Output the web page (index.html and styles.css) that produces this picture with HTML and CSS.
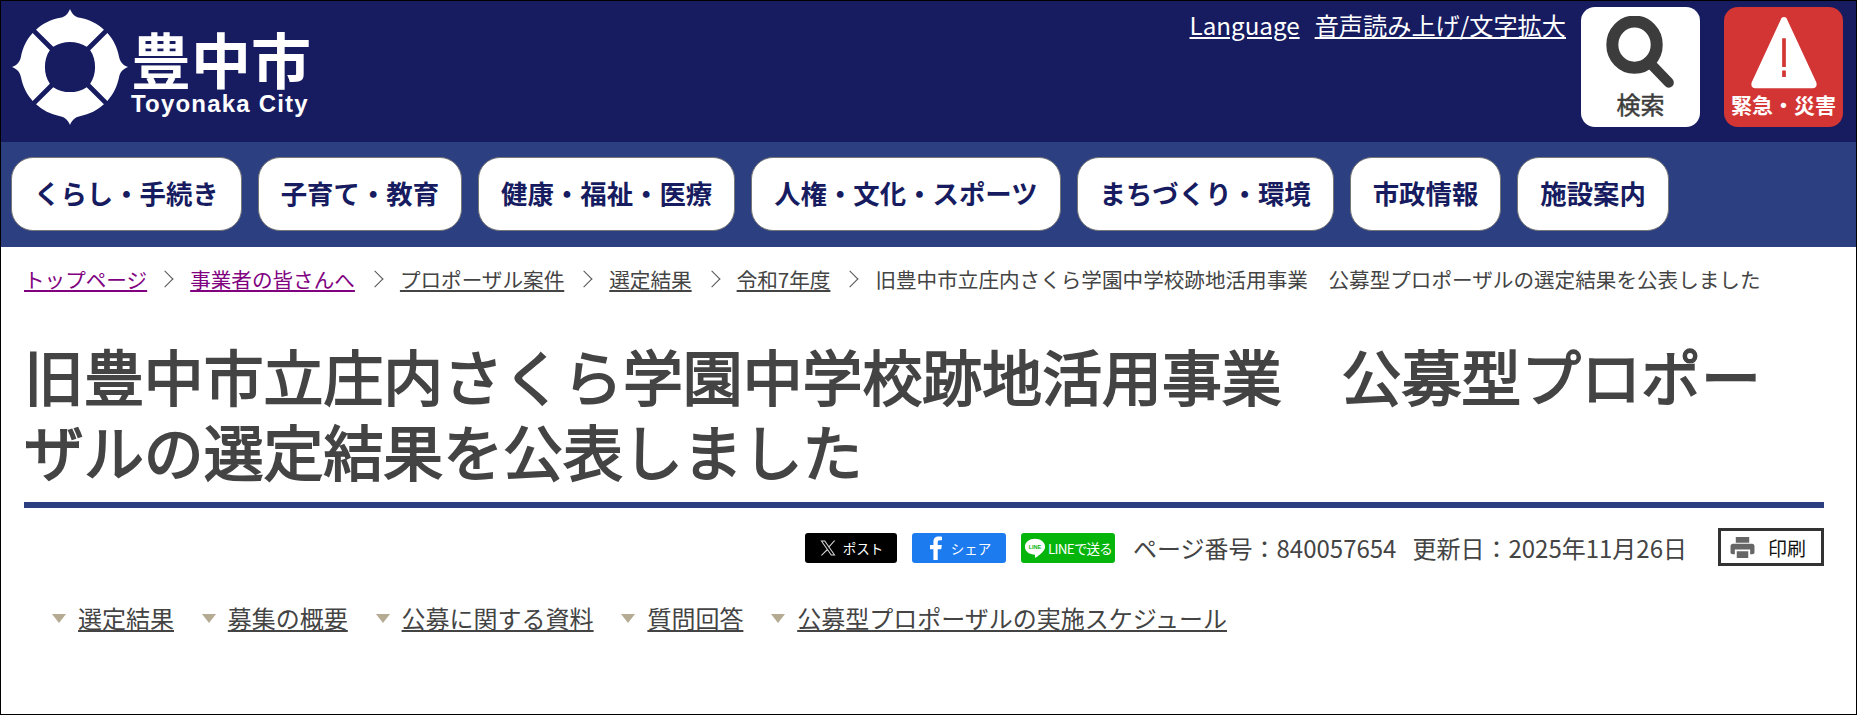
FILE: index.html
```html
<!DOCTYPE html>
<html lang="ja">
<head>
    <meta charset="UTF-8">
    <meta name="viewport" content="width=device-width, initial-scale=1.0">
    <title>旧豊中市立庄内さくら学園中学校跡地活用事業 公募型プロポーザルの選定結果を公表しました</title>
    <link rel="stylesheet" href="styles.css">
</head>
<body>
    <div class="page">
        <!-- header -->
        <header class="header">
            <a class="logo" href="#">
                <svg class="logo-mark" viewBox="-60 -60 120 120" aria-hidden="true">
                    <defs>
                        <path id="ring-part" d="M0 -59 C2 -54 5 -51 10 -50 C20 -48 28 -44 34.500 -38 L17 -20.500 C12 -24 6 -25.500 0 -25.500 C-6 -25.500 -12 -24 -17 -20.500 L-34.500 -38 C-28 -44 -20 -48 -10 -50 C-5 -51 -2 -54 0 -59 Z"/>
                    </defs>
                    <use href="#ring-part" fill="#fff"/>
                    <use href="#ring-part" fill="#fff" transform="rotate(90)"/>
                    <use href="#ring-part" fill="#fff" transform="rotate(180)"/>
                    <use href="#ring-part" fill="#fff" transform="rotate(270)"/>
                </svg>
                <span class="logo-text">
                    <span class="logo-ja">豊中市</span>
                    <span class="logo-en">Toyonaka City</span>
                </span>
            </a>
            <div class="header-right">
                <div class="header-links">
                    <a href="#">Language</a>
                    <a href="#">音声読み上げ/文字拡大</a>
                </div>
                <a class="tile tile-search" href="#">
                    <svg class="tile-icon" viewBox="0 0 80 80" aria-hidden="true">
                        <ellipse cx="33" cy="31" rx="24" ry="25" fill="none" stroke="#3c3c3c" stroke-width="13"/>
                        <path d="M50 51 L70 72" stroke="#3c3c3c" stroke-width="11" stroke-linecap="round"/>
                    </svg>
                    <span>検索</span>
                </a>
                <a class="tile tile-alert" href="#">
                    <svg class="tile-icon" viewBox="0 0 80 80" aria-hidden="true">
                        <path d="M40 1 C42 1 43 2 44 5 L75 72 C76 76 74 78 71 78 L9 78 C6 78 4 76 5 72 L36 5 C37 2 38 1 40 1 Z" fill="#fff"/>
                        <path d="M38 24 H42 V55 H38 Z M38 59 H42 V66 H38 Z" fill="#d33535"/>
                    </svg>
                    <span>緊急・災害</span>
                </a>
            </div>
        </header>

        <!-- global nav -->
        <nav class="gnav">
            <a href="#">くらし・手続き</a>
            <a href="#">子育て・教育</a>
            <a href="#">健康・福祉・医療</a>
            <a href="#">人権・文化・スポーツ</a>
            <a href="#">まちづくり・環境</a>
            <a href="#">市政情報</a>
            <a href="#">施設案内</a>
        </nav>

        <main class="main">
            <ol class="crumbs">
                <li class="crumb-top"><a class="visited" href="#">トップページ</a></li>
                <li><a class="visited" href="#">事業者の皆さんへ</a></li>
                <li><a href="#">プロポーザル案件</a></li>
                <li><a href="#">選定結果</a></li>
                <li><a href="#">令和7年度</a></li>
                <li>旧豊中市立庄内さくら学園中学校跡地活用事業　公募型プロポーザルの選定結果を公表しました</li>
            </ol>

            <h1 class="title">旧豊中市立庄内さくら学園中学校跡地活用事業　公募型プロポーザルの選定結果を公表しました</h1>

            <div class="meta">
                <a class="share share-x" href="#">
                    <svg viewBox="0 0 24 24" aria-hidden="true">
                        <path d="M2 2 H8 L22 22 H16 Z M4.500 3.300 L16.700 20.700 H19.500 L7.300 3.300 Z M20 2 H21.800 L13.200 11.800 L12.200 10.500 Z M10.800 13.400 L11.800 14.700 L4 22 H2.200 Z" fill="#ddd"/>
                    </svg>
                    <span>ポスト</span>
                </a>
                <a class="share share-fb" href="#">
                    <svg viewBox="0 0 16 28" aria-hidden="true">
                        <path d="M5 28 V15.500 H1 V10.500 H5 V7 C5 2.500 7.500 0.500 11 0.500 C12.800 0.500 14.200 0.700 15 0.800 V5 H12.300 C10.500 5 10 6 10 7.500 V10.500 H14.800 L14.100 15.500 H10 V28 Z" fill="#fff"/>
                    </svg>
                    <span>シェア</span>
                </a>
                <a class="share share-line" href="#">
                    <svg viewBox="0 0 24 24" aria-hidden="true">
                        <path d="M12 2 C18 2 23 5.800 23 10.600 C23 15.500 16.500 20 12.800 22.400 C12 22.900 11.800 22.400 11.900 21.800 L12.100 19.300 C6 19.300 1 15.500 1 10.600 C1 5.800 6 2 12 2 Z" fill="#fff"/>
                        <text class="line-mark" x="12" y="13">LINE</text>
                    </svg>
                    <span>LINEで送る</span>
                </a>
                <span class="page-no">ページ番号：840057654</span>
                <span class="updated">更新日：2025年11月26日</span>
                <a class="print" href="#">
                    <svg viewBox="0 0 26 24" aria-hidden="true">
                        <path d="M6 1 H20 V7 H6 Z M3 8 H23 C24.500 8 25.500 9 25.500 10.500 V17 C25.500 18.500 24.500 19 23 19 H21 V14 H5 V19 H3 C1.500 19 0.500 18.500 0.500 17 V10.500 C0.500 9 1.500 8 3 8 Z M7 16 H19 V23 H7 Z" fill="#666"/>
                    </svg>
                    <span>印刷</span>
                </a>
            </div>

            <ul class="anchors">
                <li><a href="#">選定結果</a></li>
                <li><a href="#">募集の概要</a></li>
                <li><a href="#">公募に関する資料</a></li>
                <li><a href="#">質問回答</a></li>
                <li><a href="#">公募型プロポーザルの実施スケジュール</a></li>
            </ul>
        </main>
    </div>
</body>
</html>
```

FILE: styles.css
```css
html, body {
    margin: 0;
    padding: 0;
    background: #fff;
}

body {
    font-family: "Noto Sans CJK JP", "Noto Sans", sans-serif;
    color: #444;
}

a {
    color: inherit;
}

.page {
    height: 715px;
    border: 1px solid #000;
    box-sizing: border-box;
    overflow: hidden;
}

/* header */
.header {
    display: flex;
    justify-content: space-between;
    height: 141px;
    background-color: #171c61;
    box-sizing: border-box;
    padding: 6px 13px 0 10px;
}

.logo {
    display: flex;
    align-items: flex-start;
    gap: 2px;
    color: #fff;
    text-decoration: none;
}

.logo-mark {
    width: 118px;
    height: 118px;
    margin-top: 1px;
}

.logo-text {
    display: flex;
    flex-direction: column;
    padding-top: 25px;
}

.logo-ja {
    font-size: 60px;
    font-weight: 700;
    line-height: 52px;
}

.logo-en {
    margin-top: 7px;
    font-family: "Liberation Sans", sans-serif;
    font-size: 24px;
    font-weight: bold;
    letter-spacing: 1.200px;
    line-height: 26px;
}

.header-right {
    display: flex;
    align-items: flex-start;
}

.header-links {
    display: flex;
    gap: 15px;
    margin-right: 15px;
    padding-top: 1px;
    font-size: 24.200px;
    line-height: 34px;
    color: #fff;
}

.tile {
    display: flex;
    flex-direction: column;
    align-items: center;
    width: 119px;
    height: 120px;
    border-radius: 14px;
    box-sizing: border-box;
    padding-top: 9px;
    text-decoration: none;
}

.tile-icon {
    width: 74px;
    height: 74px;
}

.tile-search {
    background-color: #fff;
    color: #3c3c3c;
    font-size: 24px;
    line-height: 28px;
    -webkit-text-stroke: 0.500px #3c3c3c;
}

.tile-alert {
    margin-left: 24px;
    background-color: #d33535;
    color: #fff;
    font-size: 21px;
    font-weight: bold;
    line-height: 28px;
    white-space: nowrap;
}

/* global nav */
.gnav {
    display: flex;
    gap: 16px;
    height: 105px;
    background-color: #2c3f80;
    box-sizing: border-box;
    padding: 15px 0 0 10px;
}

.gnav a {
    display: flex;
    align-items: center;
    height: 74px;
    padding: 0 22px 4px 22px;
    border: 1px solid #777;
    border-radius: 22px;
    box-sizing: border-box;
    background-color: #fff;
    color: #171c61;
    font-size: 26.400px;
    font-weight: bold;
    text-decoration: none;
    white-space: nowrap;
}

/* body */
.main {
    padding: 0 32px 0 23px;
}

.crumbs {
    display: flex;
    list-style: none;
    margin: 0;
    padding: 17px 0 0 0;
    font-size: 20.600px;
    line-height: 30px;
    white-space: nowrap;
}

.crumbs li {
    display: flex;
    align-items: center;
}

.crumbs .crumb-top {
    margin-right: -2px;
}

.crumbs li + li::before {
    content: "";
    width: 11px;
    height: 11px;
    margin: 0 19px 0 14px;
    border-top: 1px solid #555;
    border-right: 1px solid #555;
    transform: rotate(45deg);
}

.crumbs .visited {
    color: #800080;
}

.title {
    margin: 44px 0 0 0;
    padding: 0 20px 14px 0;
    border-bottom: 6px solid #2c3f80;
    font-size: 59.900px;
    font-weight: 400;
    line-height: 75px;
    color: #444;
    -webkit-text-stroke: 1.800px #444;
}

.meta {
    display: flex;
    align-items: center;
    height: 38px;
    margin-top: 20px;
    font-size: 24px;
    white-space: nowrap;
}

.share {
    display: flex;
    align-items: center;
    justify-content: center;
    gap: 6px;
    height: 30px;
    margin-top: 1px;
    border-radius: 3px;
    color: #fff;
    font-size: 13.500px;
    text-decoration: none;
}

.share svg {
    width: 18px;
    height: 24px;
}

.share-x {
    width: 92px;
    margin-left: auto;
    background-color: #000;
}

.share-fb {
    width: 94px;
    margin-left: 15px;
    background-color: #1d7bf0;
}

.share-line {
    width: 94px;
    margin-left: 15px;
    gap: 2px;
    background-color: #06b50c;
    letter-spacing: -0.800px;
}

.share-line svg {
    width: 22px;
    height: 22px;
}

.line-mark {
    font-family: "Liberation Sans", sans-serif;
    font-size: 6px;
    font-weight: bold;
    fill: #06b50c;
    text-anchor: middle;
    letter-spacing: 0;
}

.page-no {
    margin-left: 18px;
}

.updated {
    margin-left: 16px;
}

.print {
    display: flex;
    align-items: center;
    gap: 13px;
    width: 106px;
    height: 38px;
    margin-left: 31px;
    padding-left: 9px;
    border: 3px solid #333;
    box-sizing: border-box;
    color: #111;
    font-size: 19px;
    text-decoration: none;
}

.print svg {
    width: 25px;
    height: 23px;
}

.anchors {
    display: flex;
    gap: 27.800px;
    list-style: none;
    margin: 34px 0 0 0;
    padding: 0 0 0 28px;
    font-size: 24px;
    line-height: 36px;
    white-space: nowrap;
}

.anchors li {
    display: flex;
    align-items: center;
}

.anchors li::before {
    content: "";
    width: 0;
    height: 0;
    margin-right: 12px;
    border-top: 9px solid #b5aa92;
    border-left: 7.500px solid transparent;
    border-right: 7.500px solid transparent;
}
```
